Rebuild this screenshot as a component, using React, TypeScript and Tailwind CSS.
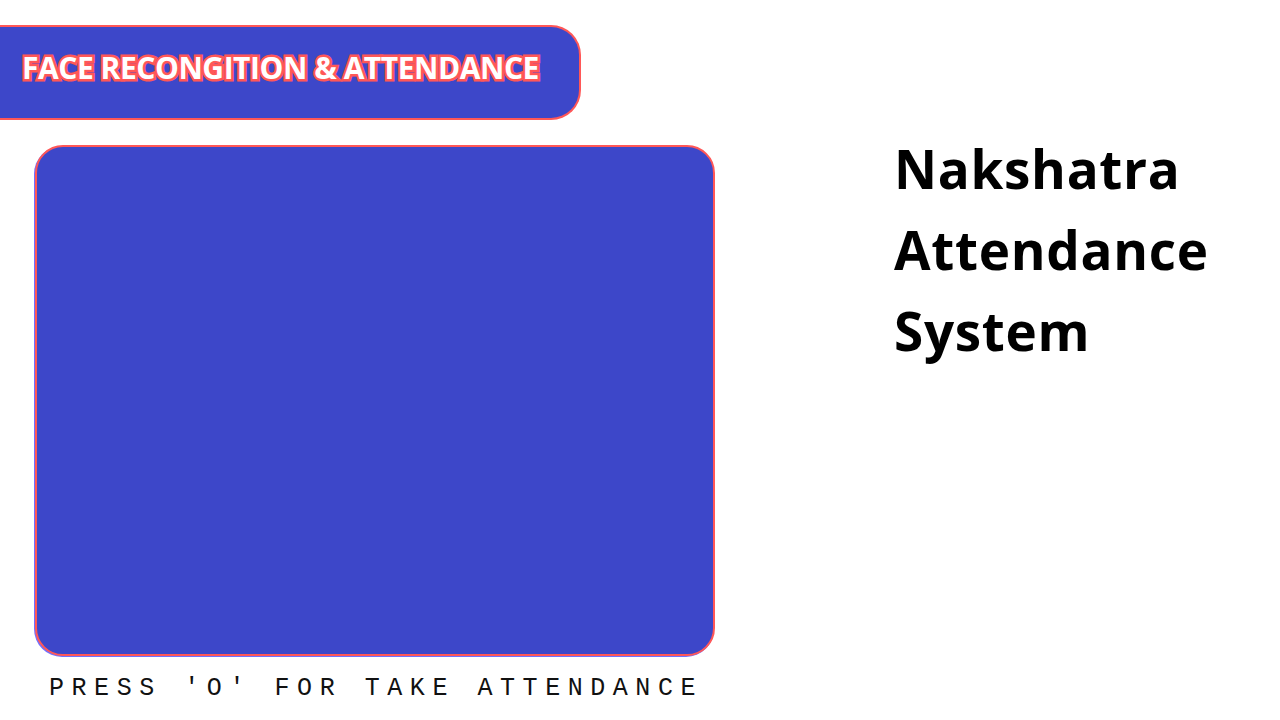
import React from "react";

export default function App() {
  return (
    <div className="w-[1280px] h-[720px] bg-white flex overflow-hidden">
      <div className="w-[730px] flex flex-col">
        <div className="mt-[25px] w-[581px] h-[95px] rounded-r-[30px] border-2 border-l-0 border-[#ff5757] bg-[#3d47c9] flex items-start pl-[22px] pt-[21px]">
          <span
            className="text-white font-bold text-[30px] leading-[40px] tracking-[-0.45px] [font-family:'Open_Sans',sans-serif] [-webkit-text-stroke:5px_#ff5757] [paint-order:stroke_fill]"
          >
            FACE RECONGITION &amp; ATTENDANCE
          </span>
        </div>
        <div className="mt-[25px] ml-[35px] w-[680px] h-[511px] rounded-[28px] border-2 border-[#ff5757] bg-[#3d47c9] shadow-[-1px_1px_0_#7070ff]" />
        <div className="ml-[49px] mt-[16px] text-[25px] leading-[34px] tracking-[7.55px] text-[#111] [font-family:'Liberation_Mono',monospace]">
          PRESS 'O' FOR TAKE ATTENDANCE
        </div>
      </div>
      <div className="pl-[164px] pt-[128px] text-black font-bold text-[53px] leading-[81px] tracking-[0.7px] [font-family:'Open_Sans',sans-serif]">
        <div>Nakshatra</div>
        <div>Attendance</div>
        <div>System</div>
      </div>
    </div>
  );
}
